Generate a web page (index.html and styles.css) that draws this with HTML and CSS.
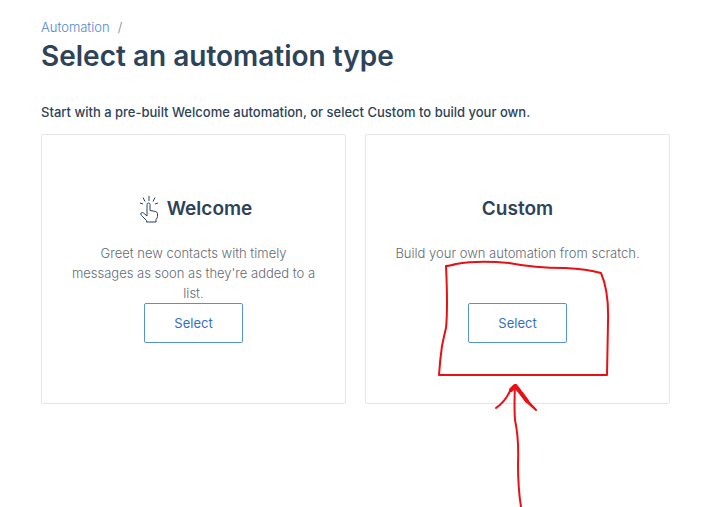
FILE: index.html
```html
<!DOCTYPE html>
<html lang="en">
<head>
<meta charset="utf-8">
<meta name="viewport" content="width=device-width, initial-scale=1">
<title>Select an automation type</title>
<link rel="stylesheet" href="styles.css">
</head>
<body>
<main class="page">
  <nav class="breadcrumb" aria-label="Breadcrumb"><a href="#">Automation</a><span class="slash">/</span></nav>
  <h1 class="title">Select an automation type</h1>
  <p class="intro">Start with a pre-built Welcome automation, or select Custom to build your own.</p>
  <div class="cards">
    <section class="card">
      <h2 class="card-title">
        <svg class="tap-icon" viewBox="0 0 20 28" aria-hidden="true">
          <path d="M10 1v5M4 2.500l2 4M16 2.500l-2 4M1 8l3 1M19 8l-3 1"/>
          <path d="M8 19V9.500q0-1.500 1.500-1.500t1.500 1.500V15.500l5.500 1q2 .4 2 2.400v2.500q0 1.600-1.500 3.100V27H7.500v-1.500L2.500 20.500q-1.300-1.600-.3-2.600t2.500.3L8 21z"/>
        </svg>
        <span>Welcome</span>
      </h2>
      <p class="card-text">Greet new contacts with timely messages as soon as they're added to a list.</p>
      <button class="button" type="button">Select</button>
    </section>
    <section class="card">
      <h2 class="card-title">Custom</h2>
      <p class="card-text">Build your own automation from scratch.</p>
      <button class="button button-spaced" type="button">Select</button>
      <svg class="marker" viewBox="0 0 180 250" aria-hidden="true">
        <path d="M10 9Q13 9 20 7Q42 3 73 6Q98 11 129 11Q151 12 165 16Q173 34 172 65L171 118L3 118Q4 103 6 89Q8 79 10 71Q12 51 10 9"/>
        <path d="M60 151Q69 145 74 134Q77 128 80 128Q84 132 86 138L100 153L91 145L79 129Q78 150 79 163Q83 181 82 207Q82 231 85 250"/>
        <path class="marker-tip" d="M75 133L79 129L85 136L91 144"/>
      </svg>
    </section>
  </div>
</main>
</body>
</html>
```
FILE: styles.css
```css
* {
  box-sizing: border-box;
}

body {
  margin: 0;
  background: #fff;
  color: #2c4359;
  font-family: Inter, "Liberation Sans", sans-serif;
  font-size: 13px;
  line-height: 20px;
}

.page {
  min-height: 100vh;
  padding: 17px 45px 0 41px;
  overflow: hidden;
}

.breadcrumb {
  display: flex;
  gap: 8px;
  font-weight: 300;
}

.breadcrumb a {
  color: #4f86cf;
  text-decoration: none;
}

.slash {
  color: #7b8188;
}

.title {
  margin: 0 0 27px;
  font-size: 28px;
  font-weight: 600;
  line-height: 38px;
}

.intro {
  margin: 0 0 12px;
  font-weight: 500;
}

.cards {
  display: grid;
  grid-template-columns: 1fr 1fr;
  gap: 19px;
}

.card {
  position: relative;
  display: flex;
  flex-direction: column;
  align-items: center;
  padding: 60px 28px;
  border: 1px solid #e6e6e8;
  border-radius: 2px;
  text-align: center;
}

.card-title {
  display: flex;
  align-items: center;
  gap: 8px;
  margin: 0 0 20px;
  font-size: 19px;
  font-weight: 600;
  line-height: 28px;
}

.tap-icon {
  width: 20px;
  height: 28px;
  margin-left: 4px;
  fill: none;
  stroke: #2c4359;
  stroke-width: 1;
}

.card-text {
  margin: 0;
  color: #656b73;
  font-weight: 300;
}

.button {
  width: 99px;
  height: 40px;
  padding: 0;
  border: 1px solid #5792cf;
  border-radius: 2px;
  background: #fff;
  color: #326fc5;
  font: inherit;
}

.button-spaced {
  margin-top: auto;
}

.marker {
  position: absolute;
  top: 122px;
  left: 50%;
  width: 180px;
  height: 250px;
  margin-left: -82px;
  fill: none;
  stroke: #e81014;
  stroke-width: 2;
  stroke-linecap: round;
  stroke-linejoin: round;
  pointer-events: none;
}

.marker-tip {
  stroke-width: 4;
}
```
